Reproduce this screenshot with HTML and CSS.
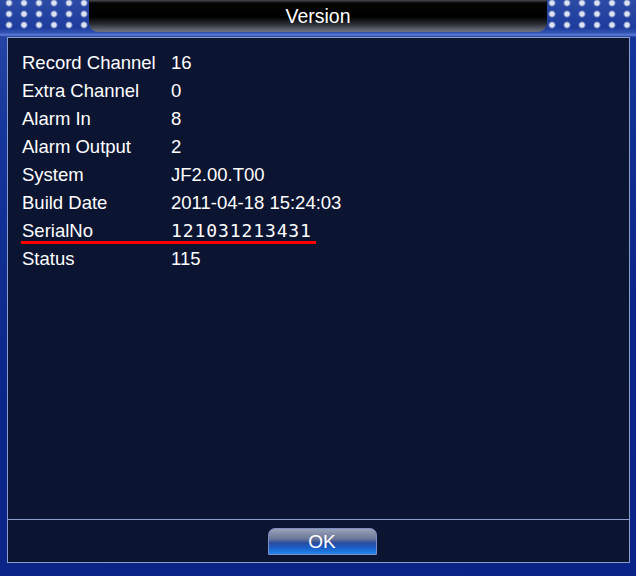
FILE: index.html
```html
<!DOCTYPE html>
<html lang="en">
<head>
<meta charset="UTF-8" />
<meta name="viewport" content="width=device-width, initial-scale=1" />
<title>Version</title>
<link rel="stylesheet" href="styles.css">
</head>
<body>
<div class="frame">
    <div class="header">
        <div class="dots dots-left"></div>
        <div class="title-bar">Version</div>
        <div class="dots dots-right"></div>
    </div>
    <div class="panel">
        <div class="info">
            <div class="row"><span class="label">Record Channel</span><span class="value">16</span></div>
            <div class="row"><span class="label">Extra Channel</span><span class="value">0</span></div>
            <div class="row"><span class="label">Alarm In</span><span class="value">8</span></div>
            <div class="row"><span class="label">Alarm Output</span><span class="value">2</span></div>
            <div class="row"><span class="label">System</span><span class="value">JF2.00.T00</span></div>
            <div class="row"><span class="label">Build Date</span><span class="value">2011-04-18 15:24:03</span></div>
            <div class="row serial"><span class="label">SerialNo</span><span class="value mono">121031213431</span></div>
            <div class="row"><span class="label">Status</span><span class="value">115</span></div>
        </div>
        <div class="footer">
            <button class="ok-btn">OK</button>
        </div>
    </div>
</div>
</body>
</html>
```

FILE: styles.css
```css
* {
    box-sizing: border-box;
}
body, html {
    margin: 0;
    height: 100%;
    font-family: "Liberation Sans", Arial, sans-serif;
}
.frame {
    width: 636px;
    height: 576px;
    display: flex;
    flex-direction: column;
    background: linear-gradient(170deg, #2a4aa8 0%, #14359a 20%, #0a2588 60%, #0a2386 100%);
}
.header {
    height: 37px;
    display: flex;
    background: linear-gradient(#2c4ba6 0, #1d3c9c 28px, #3556b8 33px, #5e7fd0 35px, #1b3a9e 37px);
}
.dots {
    height: 31px;
    background-image: radial-gradient(circle, #dfe4f2 2.6px, rgba(223, 228, 242, 0) 3.4px);
    background-size: 15px 11px;
}
.dots-left {
    width: 89px;
    background-position: 1.5px -2.5px;
}
.dots-right {
    width: 89px;
    background-position: -2.5px -2.5px;
}
.title-bar {
    flex: 1;
    height: 32px;
    border-radius: 0 0 9px 9px;
    background: linear-gradient(#4a4a52 0, #050505 3px, #000 17px, #2a2c34 24px, #6a6e7c 31px);
    color: #fff;
    font-size: 19.5px;
    text-align: center;
    line-height: 32px;
}
.panel {
    flex: 1;
    margin: 0 6px 13px 7px;
    border: 1px solid #8c9ccc;
    background: #0b1431;
    display: flex;
    flex-direction: column;
}
.info {
    flex: 1;
    padding: 11px 0 0 14px;
}
.row {
    position: relative;
    height: 28px;
    line-height: 28px;
    display: flex;
    color: #fff;
    font-size: 18.5px;
}
.label {
    width: 149px;
}
.mono {
    font-family: "DejaVu Sans Mono", monospace;
    font-size: 18px;
    letter-spacing: 0.9px;
}
.serial::after {
    content: "";
    position: absolute;
    left: -1px;
    top: 24px;
    width: 295px;
    height: 3px;
    background: #ff0000;
}
.footer {
    height: 43px;
    border-top: 1px solid #8c9ccc;
    display: flex;
    justify-content: center;
    padding-top: 8px;
}
.ok-btn {
    width: 109px;
    height: 27px;
    margin-left: 7px;
    border: 1px solid #7d8fc4;
    border-radius: 7px 7px 0 0;
    background: linear-gradient(#9aa2b8 0%, #6a7698 40%, #2c4c9c 55%, #1a5ec8 75%, #1f86ea 100%);
    color: #fff;
    font-family: "Liberation Sans", Arial, sans-serif;
    font-size: 19px;
    line-height: 24px;
    padding: 0;
    cursor: pointer;
}
```
